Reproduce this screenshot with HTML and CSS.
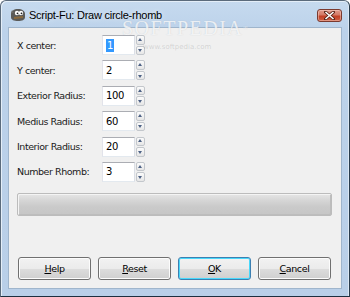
FILE: index.html
```html
<!DOCTYPE html>
<html>
<head>
<meta charset="utf-8">
<link rel="stylesheet" href="styles.css">
</head>
<body>
<div class="window">
  <div class="titlebar">
    <svg class="app-icon" width="16" height="14" viewBox="0 0 16 14">
      <path d="M1 6 C1 3 4 1 8 1 C12 1 15 3 15 6 L15 9 C15 12 12 13 8 13 C4 13 1 12 1 9 Z" fill="#5a5a58"/>
      <path d="M2 2 L4 5 L1 5 Z" fill="#6b6b68"/>
      <circle cx="7" cy="5" r="2.2" fill="#fff"/>
      <circle cx="11" cy="5" r="2.2" fill="#fff"/>
      <circle cx="7.5" cy="5.3" r="0.9" fill="#222"/>
      <circle cx="11.5" cy="5.3" r="0.9" fill="#222"/>
      <path d="M4 9 L13 8 L13 10 L4 11 Z" fill="#8b6a3c"/>
    </svg>
    <span class="title">Script-Fu: Draw circle-rhomb</span>
    <div class="close"><svg width="11" height="9" viewBox="0 0 11 9"><path d="M1.5 1 L9.5 8 M9.5 1 L1.5 8" stroke="#5a2418" stroke-width="3" stroke-linecap="square"/><path d="M1.5 1 L9.5 8 M9.5 1 L1.5 8" stroke="#fff" stroke-width="1.6"/></svg></div>
  </div>
  <div class="client">
    <div class="form">
      <label class="lbl">X center:</label>
      <div class="field"><span class="sel">1</span></div>
      <div class="spin"><span class="up"></span><span class="down"></span></div>

      <label class="lbl">Y center:</label>
      <div class="field">2</div>
      <div class="spin"><span class="up"></span><span class="down"></span></div>

      <label class="lbl">Exterior Radius:</label>
      <div class="field">100</div>
      <div class="spin"><span class="up"></span><span class="down"></span></div>

      <label class="lbl">Medius Radius:</label>
      <div class="field">60</div>
      <div class="spin"><span class="up"></span><span class="down"></span></div>

      <label class="lbl">Interior Radius:</label>
      <div class="field">20</div>
      <div class="spin"><span class="up"></span><span class="down"></span></div>

      <label class="lbl">Number Rhomb:</label>
      <div class="field">3</div>
      <div class="spin"><span class="up"></span><span class="down"></span></div>
    </div>
    <div class="progress"></div>
    <div class="buttons">
      <button class="btn"><u>H</u>elp</button>
      <button class="btn"><u>R</u>eset</button>
      <button class="btn default"><u>O</u>K</button>
      <button class="btn"><u>C</u>ancel</button>
    </div>
  </div>
  <div class="watermark">SOFTPEDIA<sup>®</sup></div>
  <div class="watermark-url">www.softpedia.com</div>
</div>
</body>
</html>
```
FILE: styles.css
```css
html, body {
  margin: 0;
  padding: 0;
  width: 350px;
  height: 297px;
  overflow: hidden;
  background: #fff;
}
.window {
  position: relative;
  box-sizing: border-box;
  width: 350px;
  height: 297px;
  border: 1px solid #5b6b7c;
  border-bottom-color: #1c2f3f;
  border-right-color: #2a3d4e;
  border-radius: 6px 6px 0 0;
  background: linear-gradient(to bottom, #c6daef 0px, #bcd2ea 30px, #b9cfe8 100%);
  padding: 0 7px 7px 7px;
  display: flex;
  flex-direction: column;
  box-shadow: inset 1px 1px 0 #e4eef8, inset -1px 0 0 #dbe7f3;
}
.titlebar {
  height: 26px;
  display: flex;
  align-items: center;
  position: relative;
}
.app-icon {
  margin-left: 2px;
  margin-top: 1px;
}
.title {
  margin-left: 3px;
  margin-top: 1px;
  font-family: "Liberation Sans", Arial, sans-serif;
  font-size: 11px;
  letter-spacing: -0.25px;
  color: #000;
  text-shadow: 0 0 6px rgba(255,255,255,0.8);
}
.close {
  position: absolute;
  right: 0px;
  top: 8px;
  box-sizing: border-box;
  width: 25px;
  height: 13px;
  border: 1px solid #7b3a2f;
  border-radius: 3px;
  background: linear-gradient(to bottom, #e0998a 0%, #d47a66 45%, #c23f25 55%, #cc5f42 100%);
  box-shadow: inset 0 0 0 1px rgba(255,220,210,0.45);
  display: flex;
  align-items: center;
  justify-content: center;
}
.close svg { display: block; }
.client {
  flex: 1;
  background: #f0f0f0;
  border: 1px solid #9fb5cc;
  padding: 7px 9px 0 8px;
  font-family: "DejaVu Sans", Verdana, sans-serif;
  font-size: 9.5px;
}
.form {
  display: grid;
  grid-template-columns: 84px 33px 9px;
  column-gap: 1px;
  row-gap: 5.4px;
  align-items: center;
}
.lbl {
  letter-spacing: -0.45px;
  color: #1a1a1a;
}
.field {
  box-sizing: border-box;
  height: 20px;
  background: #fff;
  border: 1px solid #abadb3;
  border-right-color: #dbdfe6;
  border-bottom-color: #e3e9ef;
  border-left-color: #e2e3ea;
  border-top-color: #abadb3;
  padding: 0 0 0 3px;
  display: flex;
  align-items: center;
  font-size: 10px;
  letter-spacing: -0.4px;
  color: #000;
}
.sel {
  background: #3399ff;
  color: #fff;
  padding: 0 1px;
  line-height: 13px;
}
.spin {
  height: 20px;
  display: flex;
  flex-direction: column;
  gap: 1px;
}
.spin span {
  flex: 1;
  box-sizing: border-box;
  border: 1px solid #c3c7cc;
  border-radius: 2px;
  background: linear-gradient(to bottom, #fbfbfb, #e6e6e6);
  position: relative;
}
.spin span::after {
  content: "";
  position: absolute;
  left: 50%;
  top: 50%;
  margin-left: -2.5px;
  width: 0;
  height: 0;
  border-left: 2.5px solid transparent;
  border-right: 2.5px solid transparent;
}
.spin .up::after {
  margin-top: -2px;
  border-bottom: 3px solid #4d6185;
}
.spin .down::after {
  margin-top: -1px;
  border-top: 3px solid #4d6185;
}
.progress {
  box-sizing: border-box;
  margin-top: 11px;
  width: 315px;
  height: 23px;
  border: 1px solid #bcbcbc;
  border-radius: 2px;
  background: linear-gradient(to bottom, #e6e6e6 0%, #d6d6d6 30%, #cacaca 60%, #c6c6c6 100%);
  box-shadow: inset 1px 1px 0 #f4f4f4, inset -1px -1px 0 #bdbdbd;
}
.buttons {
  margin-top: 41px;
  display: flex;
  gap: 7px;
  margin-left: 1px;
}
.btn {
  box-sizing: border-box;
  width: 73px;
  height: 23px;
  margin: 0;
  padding: 0;
  border: 1px solid #707070;
  border-radius: 3px;
  background: linear-gradient(to bottom, #f2f2f2 0%, #ebebeb 50%, #dddddd 51%, #cfcfcf 100%);
  box-shadow: inset 0 0 0 1px #fcfcfc;
  font-family: "DejaVu Sans", Verdana, sans-serif;
  font-size: 9.5px;
  letter-spacing: -0.4px;
  color: #000;
}
.btn.default {
  border-color: #3c7fb1;
  box-shadow: inset 0 0 0 1px #48d8fb;
}
.watermark {
  position: absolute;
  left: 121px;
  top: 16px;
  font-family: "Liberation Serif", "Times New Roman", serif;
  font-size: 20px;
  line-height: 22px;
  letter-spacing: 1.5px;
  color: rgba(255,255,255,0.75);
  text-shadow: 0 0 1px rgba(150,160,170,0.45);
  pointer-events: none;
}
.watermark sup {
  font-size: 6px;
  vertical-align: top;
}
.watermark-url {
  position: absolute;
  left: 142px;
  top: 42px;
  font-family: "DejaVu Sans", sans-serif;
  font-size: 7px;
  color: rgba(120,120,120,0.25);
  pointer-events: none;
}
```
